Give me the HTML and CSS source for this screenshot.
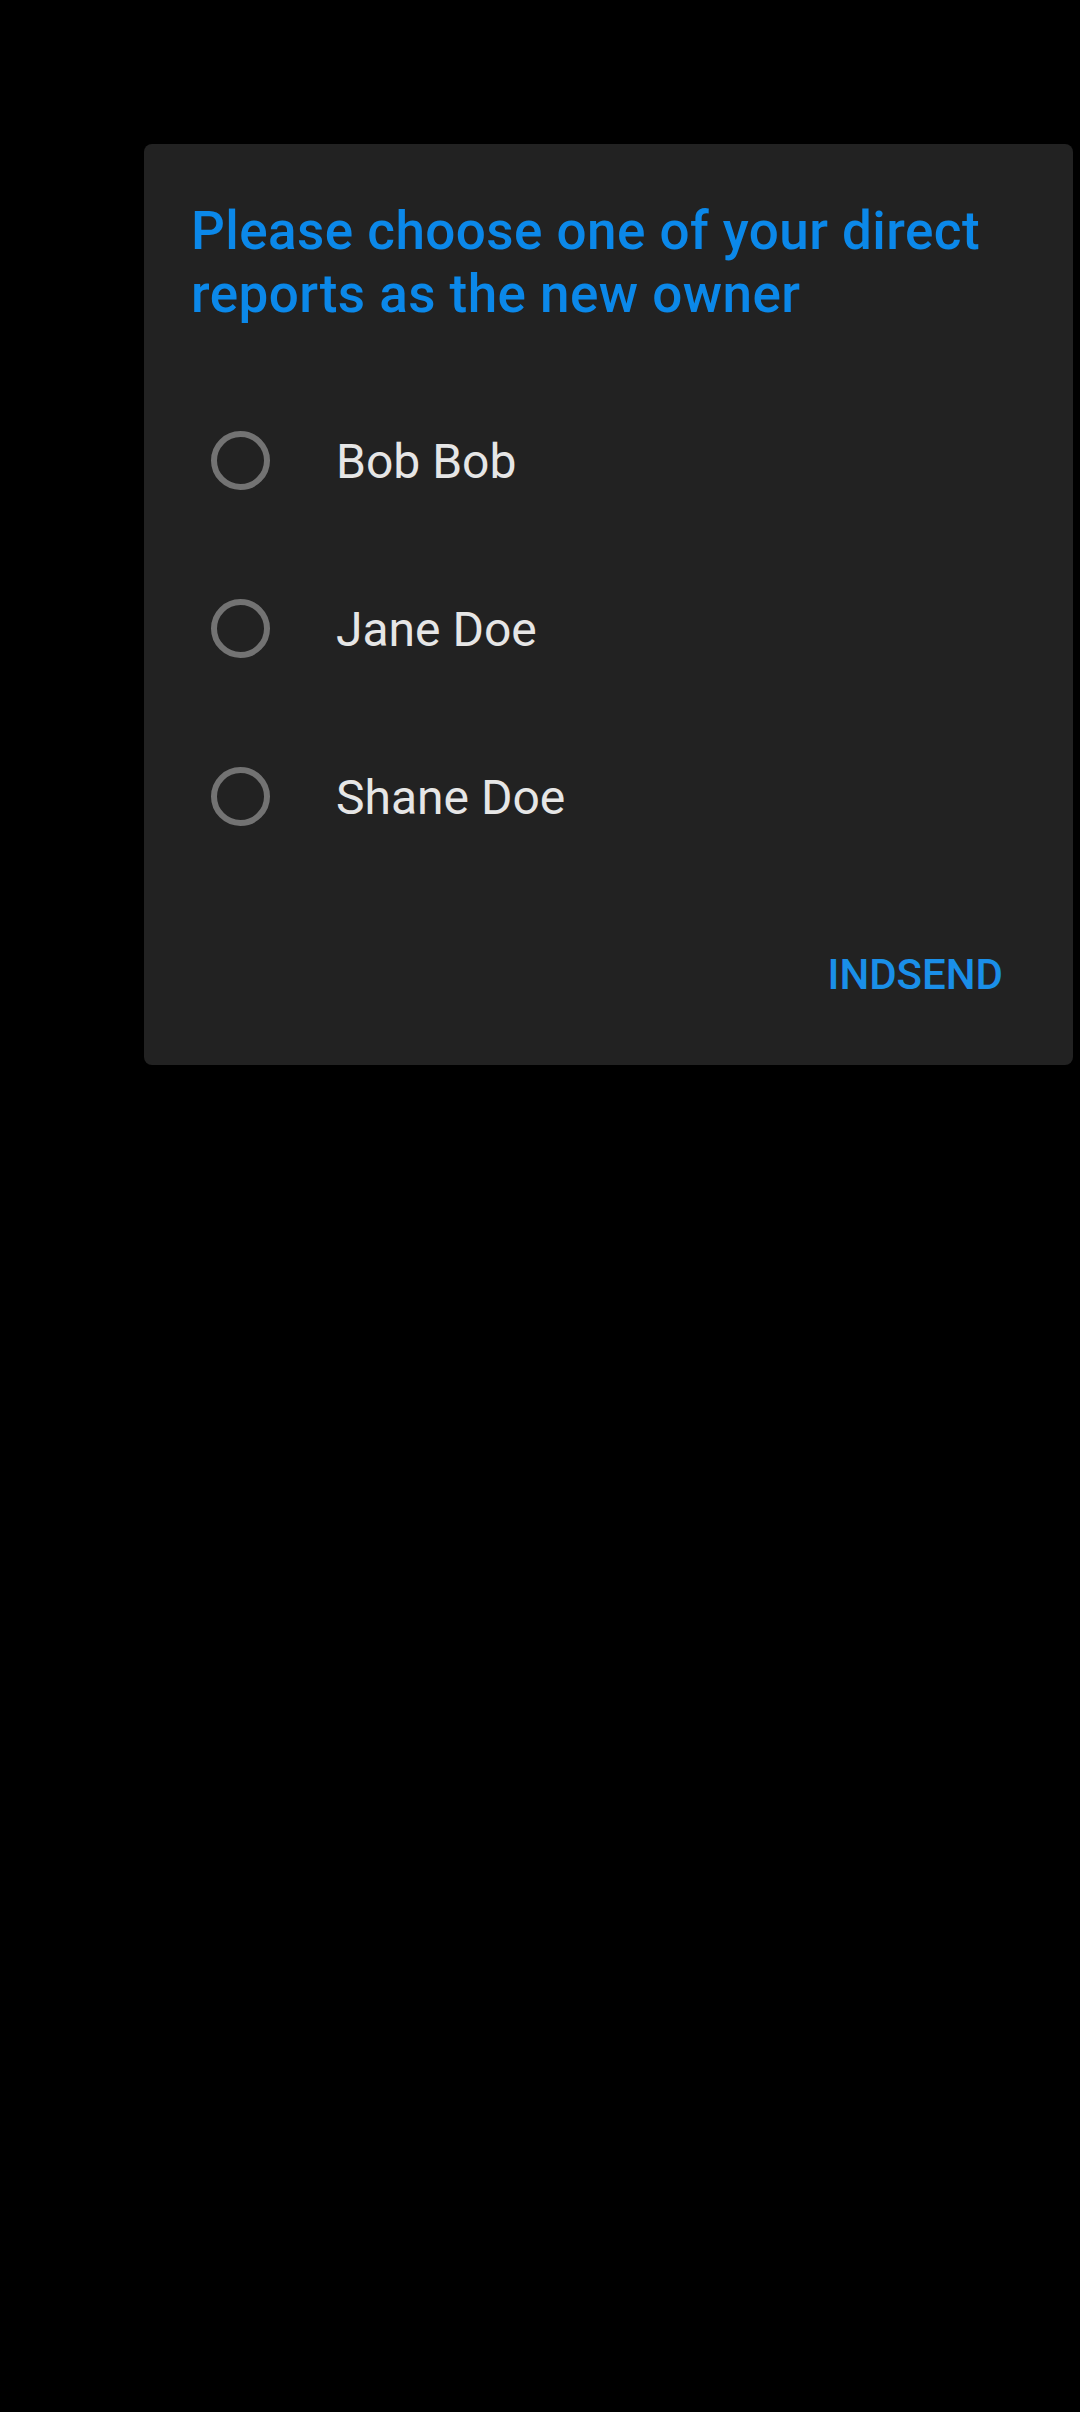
FILE: index.html
```html
<!DOCTYPE html>
<html>
<head>
<meta charset="utf-8">
<link rel="stylesheet" href="styles.css">
</head>
<body>
<div class="dialog">
  <h1 class="title">Please choose one of your direct reports as the new owner</h1>
  <ul class="options">
    <li class="option"><span class="radio"></span><span class="label">Bob Bob</span></li>
    <li class="option"><span class="radio"></span><span class="label">Jane Doe</span></li>
    <li class="option"><span class="radio"></span><span class="label">Shane Doe</span></li>
  </ul>
  <div class="actions"><button class="btn">INDSEND</button></div>
</div>
</body>
</html>
```
FILE: styles.css
```css
html, body {
  margin: 0;
  padding: 0;
  background: #000;
  width: 1080px;
  height: 2412px;
  font-family: Roboto, "Noto Sans", sans-serif;
}
.dialog {
  margin: 144px 0 0 144px;
  width: 929px;
  height: 921px;
  background: #222222;
  border-radius: 8px;
  box-sizing: border-box;
  padding: 56px 70px 0 47px;
  display: flex;
  flex-direction: column;
}
.title {
  margin: 0;
  font-size: 53px;
  font-weight: 500;
  line-height: 63px;
  letter-spacing: 0.45px;
  color: #0b88e9;
}
.options {
  list-style: none;
  margin: 50px 0 0 0;
  padding: 0;
}
.option {
  height: 168px;
  display: flex;
  align-items: center;
  padding-left: 20px;
}
.radio {
  width: 59px;
  height: 59px;
  box-sizing: border-box;
  border: 6px solid #737373;
  border-radius: 50%;
  flex: none;
}
.label {
  margin-left: 66px;
  margin-top: 4px;
  font-size: 48px;
  color: #e6e6e6;
  line-height: 1;
}
.actions {
  display: flex;
  justify-content: flex-end;
  margin-top: 70px;
}
.btn {
  background: none;
  border: none;
  padding: 0;
  font-family: Roboto, "Noto Sans", sans-serif;
  font-size: 42px;
  font-weight: 500;
  line-height: 49px;
  color: #1a8fe8;
}
```
